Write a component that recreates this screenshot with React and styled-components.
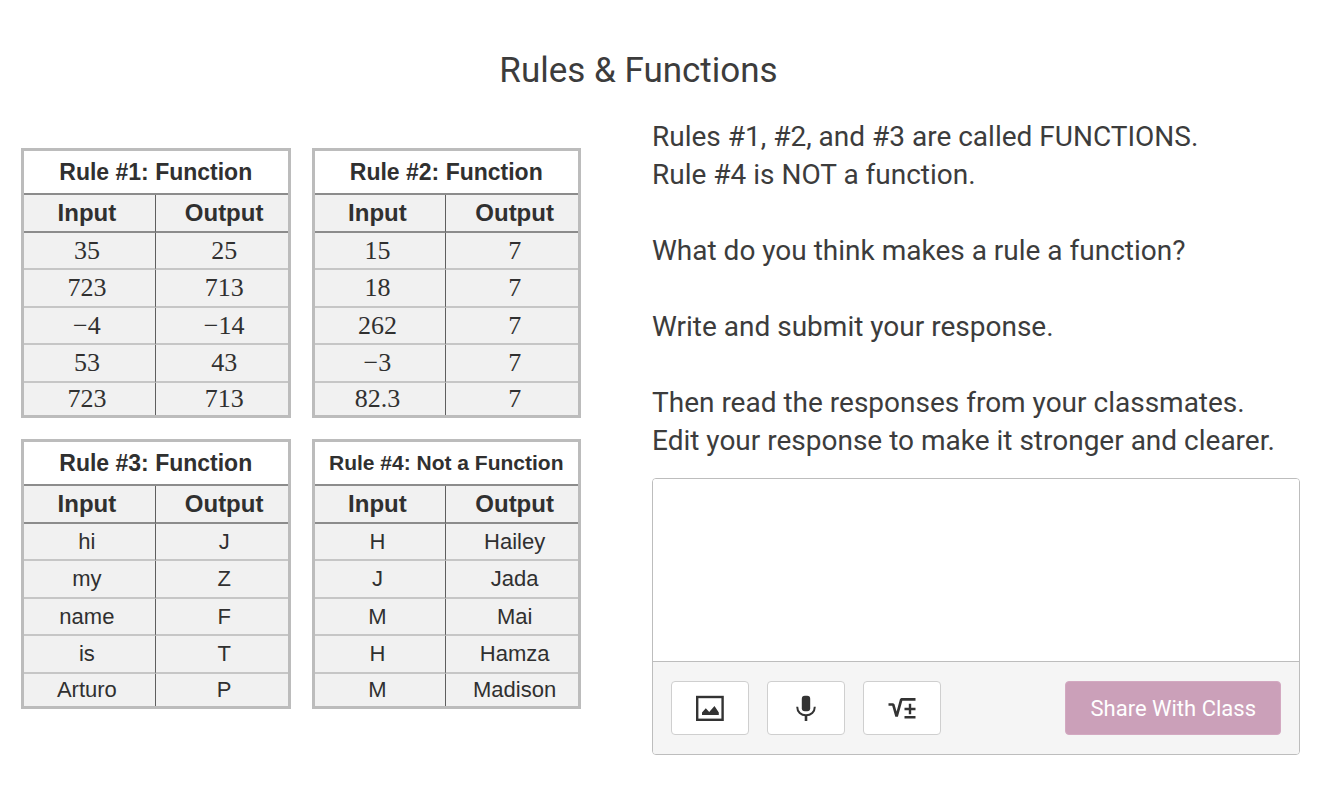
import React from "react";
import styled, { createGlobalStyle } from "styled-components";

const GlobalStyle = createGlobalStyle`
  * { box-sizing: border-box; }
  body {
    margin: 0;
    background: #fff;
    color: #3c3c3c;
    font-family: Roboto, "Liberation Sans", sans-serif;
  }
`;

const Page = styled.main`
  padding: 49px 18px 48px 21px;
`;

const Title = styled.h1`
  margin: 0;
  padding-right: 44px;
  font-size: 35px;
  line-height: 44px;
  font-weight: 400;
  text-align: center;
`;

const Columns = styled.div`
  display: grid;
  grid-template-columns: 560fr 648fr;
  column-gap: 71px;
  margin-top: 25px;
`;

const Tables = styled.section`
  display: grid;
  grid-template-columns: 1fr 1fr;
  gap: 21px;
  align-content: start;
  padding-top: 30px;
`;

const RuleTable = styled.table`
  width: 100%;
  table-layout: fixed;
  border: 3px solid #bcbcbc;
  border-spacing: 0;
  color: #303030;
  font-family: "Liberation Sans", Arial, sans-serif;
  text-align: center;
`;

const RuleName = styled.th`
  height: 44px;
  padding: 0;
  border-bottom: 2px solid #8c8c8c;
  font-size: ${(p) => (p.$long ? "21px" : "23px")};
  line-height: 24px;
  white-space: nowrap;
`;

const ColumnName = styled.th`
  height: 38px;
  padding: 0 0 0 5px;
  background: #f1f1f1;
  border-bottom: 2px solid #8c8c8c;
  font-size: 24px;
  line-height: 28px;

  &:first-child {
    padding: 0 5px 0 0;
    border-right: 1px solid #5f5f5f;
  }
`;

const Cell = styled.td`
  height: 37px;
  padding: 0 0 0 5px;
  background: #f1f1f1;
  border-bottom: 2px solid #c6c6c6;
  font-family: ${(p) => (p.$numeric ? '"Liberation Serif", serif' : "inherit")};
  font-size: ${(p) => (p.$numeric ? "26px" : "22px")};
  line-height: 28px;

  &:first-child {
    padding: 0 5px 0 0;
    border-right: 1px solid #5f5f5f;
  }

  tr:nth-child(even) > & {
    height: 38px;
  }

  tr:last-child > & {
    height: 32px;
    border-bottom: 0;
  }
`;

const Prompt = styled.section`
  min-width: 0;
`;

const Paragraph = styled.p`
  margin: 0 0 38px;
  font-size: 28px;
  line-height: 38px;

  &:last-of-type {
    margin-bottom: 18px;
  }
`;

const Answer = styled.form`
  overflow: hidden;
  border: 1px solid #bdbdbd;
  border-radius: 4px;
`;

const AnswerBox = styled.textarea`
  display: block;
  width: 100%;
  height: 182px;
  padding: 16px;
  border: 0;
  outline: 0;
  resize: none;
  font: inherit;
  font-size: 24px;
`;

const Toolbar = styled.div`
  display: flex;
  align-items: center;
  gap: 18px;
  padding: 19px 18px;
  border-top: 1px solid #bdbdbd;
  background: #f5f5f5;
`;

const ToolButton = styled.button`
  display: flex;
  align-items: center;
  justify-content: center;
  width: 78px;
  height: 54px;
  padding: 0;
  border: 1px solid #cfcfcf;
  border-radius: 4px;
  background: #fff;
  color: #333;
`;

const ShareButton = styled.button`
  height: 54px;
  margin-left: auto;
  padding: 0 24px;
  border: 1px solid #d3a9c1;
  border-radius: 4px;
  background: #cba0b9;
  color: #fff;
  font: inherit;
  font-size: 22px;
`;

const ImageIcon = () => (
  <svg width="28" height="26" viewBox="0 0 28 26" fill="none" aria-hidden="true">
    <rect x="1.2" y="2" width="25.4" height="22.800" stroke="currentColor" strokeWidth="2.4" />
    <path d="M6 20V17.500L9.800 13.300L13.200 17L18.500 11L22.800 17.500V20Z" fill="currentColor" />
  </svg>
);

const MicIcon = () => (
  <svg width="20" height="26" viewBox="0 0 20 26" fill="none" aria-hidden="true">
    <rect x="5.800" y="0.800" width="8.400" height="15.500" rx="3" fill="currentColor" />
    <path d="M1.200 11.800C1.200 16.800 5 20.300 10 20.300S18.800 16.800 18.800 11.800" stroke="currentColor" strokeWidth="2" />
    <path d="M10 20V26" stroke="currentColor" strokeWidth="2.600" />
  </svg>
);

const MathIcon = () => (
  <svg width="28" height="22" viewBox="0 0 28 22" fill="none" stroke="currentColor" strokeWidth="2.4" aria-hidden="true">
    <path d="M0.500 7.500H5.200L8.600 19.500L13.300 2.300H27.500" strokeWidth="2.700" strokeLinejoin="bevel" />
    <path d="M16.500 12H27.500M22 6.700V17.300M16.500 20.300H27.500" />
  </svg>
);

const rules = [
  {
    name: "Rule #1: Function",
    numeric: true,
    rows: [["35", "25"], ["723", "713"], ["−4", "−14"], ["53", "43"], ["723", "713"]],
  },
  {
    name: "Rule #2: Function",
    numeric: true,
    rows: [["15", "7"], ["18", "7"], ["262", "7"], ["−3", "7"], ["82.3", "7"]],
  },
  {
    name: "Rule #3: Function",
    rows: [["hi", "J"], ["my", "Z"], ["name", "F"], ["is", "T"], ["Arturo", "P"]],
  },
  {
    name: "Rule #4: Not a Function",
    long: true,
    rows: [["H", "Hailey"], ["J", "Jada"], ["M", "Mai"], ["H", "Hamza"], ["M", "Madison"]],
  },
];

const Rule = ({ name, numeric, long, rows }) => (
  <RuleTable>
    <thead>
      <tr>
        <RuleName colSpan={2} $long={long}>{name}</RuleName>
      </tr>
      <tr>
        <ColumnName scope="col">Input</ColumnName>
        <ColumnName scope="col">Output</ColumnName>
      </tr>
    </thead>
    <tbody>
      {rows.map(([input, output], i) => (
        <tr key={i}>
          <Cell $numeric={numeric}>{input}</Cell>
          <Cell $numeric={numeric}>{output}</Cell>
        </tr>
      ))}
    </tbody>
  </RuleTable>
);

export default function App() {
  return (
    <>
      <GlobalStyle />
      <Page>
        <Title>Rules &amp; Functions</Title>
        <Columns>
          <Tables>
            {rules.map((rule) => (
              <Rule key={rule.name} {...rule} />
            ))}
          </Tables>
          <Prompt>
            <Paragraph>
              Rules #1, #2, and #3 are called FUNCTIONS.
              <br />
              Rule #4 is NOT a function.
            </Paragraph>
            <Paragraph>What do you think makes a rule a function?</Paragraph>
            <Paragraph>Write and submit your response.</Paragraph>
            <Paragraph>
              Then read the responses from your classmates.
              <br />
              Edit your response to make it stronger and clearer.
            </Paragraph>
            <Answer onSubmit={(e) => e.preventDefault()}>
              <AnswerBox aria-label="Your response" />
              <Toolbar>
                <ToolButton type="button" aria-label="Add image"><ImageIcon /></ToolButton>
                <ToolButton type="button" aria-label="Record audio"><MicIcon /></ToolButton>
                <ToolButton type="button" aria-label="Insert math"><MathIcon /></ToolButton>
                <ShareButton type="submit">Share With Class</ShareButton>
              </Toolbar>
            </Answer>
          </Prompt>
        </Columns>
      </Page>
    </>
  );
}
